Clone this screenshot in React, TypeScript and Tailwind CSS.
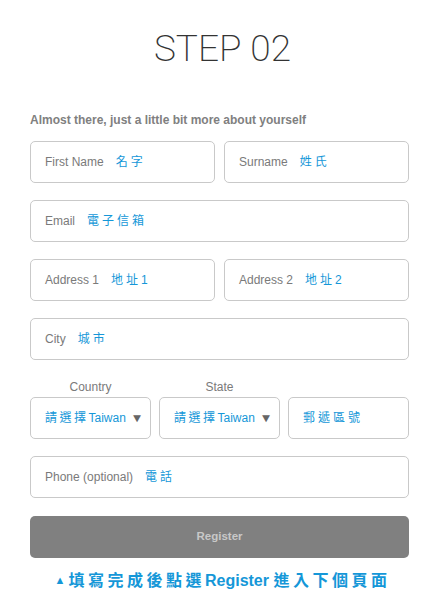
import React from "react";

const sans = { fontFamily: '"Liberation Sans", Arial, "Noto Sans CJK TC", sans-serif' };

function Field({ label, zh, className = "" }: { label: string; zh: string; className?: string }) {
  return (
    <div
      className={`h-[42px] rounded-[5px] border border-[#c9c9c9] bg-white flex items-center pl-[14px] ${className}`}
    >
      <span className="text-[12px] text-[#7a7a7a]">{label}</span>
      <span className="ml-[12px] text-[12px] text-[#1597d8] tracking-[3px]">{zh}</span>
    </div>
  );
}

function SelectBox({ text }: { text: string }) {
  return (
    <div className="h-[42px] rounded-[5px] border border-[#c9c9c9] bg-white flex items-center pl-[14px] pr-[7px]">
      <span className="text-[12px] text-[#1597d8] tracking-[2.5px]">請選擇</span>
      <span className="text-[12px] text-[#1597d8]">{text}</span>
      <span className="ml-auto text-[12px] text-[#666] scale-x-110">▼</span>
    </div>
  );
}

export default function App() {
  return (
    <div className="w-[445px] h-[611px] bg-white" style={sans}>
      <div className="pt-[28px] flex justify-center">
        <h1
          className="text-[37px] leading-[42px] text-[#333]"
          style={{ fontFamily: 'Roboto, "Liberation Sans", sans-serif', fontWeight: 200 }}
        >
          STEP 02
        </h1>
      </div>
      <div className="ml-[30px] w-[379px]">
        <p className="mt-[43px] text-[12px] leading-[14px] font-bold text-[#808080]">
          Almost there, just a little bit more about yourself
        </p>
        <div className="mt-[14px] flex flex-col gap-[17px]">
          <div className="grid grid-cols-2 gap-[9px]">
            <Field label="First Name" zh="名字" />
            <Field label="Surname" zh="姓氏" />
          </div>
          <Field label="Email" zh="電子信箱" />
          <div className="grid grid-cols-2 gap-[9px]">
            <Field label="Address 1" zh="地址1" />
            <Field label="Address 2" zh="地址2" />
          </div>
          <Field label="City" zh="城市" />
          <div>
            <div className="grid grid-cols-3 gap-[8px] mt-[3px] mb-[3px]">
              <div className="text-center text-[12px] leading-[14px] text-[#7a7a7a]">Country</div>
              <div className="text-center text-[12px] leading-[14px] text-[#7a7a7a]">State</div>
              <div />
            </div>
            <div className="grid grid-cols-3 gap-[8px]">
              <SelectBox text="Taiwan" />
              <SelectBox text="Taiwan" />
              <div className="h-[42px] rounded-[5px] border border-[#c9c9c9] bg-white flex items-center pl-[14px]">
                <span className="text-[12px] text-[#1597d8] tracking-[3px]">郵遞區號</span>
              </div>
            </div>
          </div>
          <Field label="Phone (optional)" zh="電話" />
        </div>
        <button className="mt-[18px] w-full h-[42px] rounded-[5px] bg-[#808080] text-[11.5px] font-bold text-[#c8c8c8]">
          Register
        </button>
        <p className="mt-[11px] pl-[6px] text-center text-[16px] leading-[22px] font-bold text-[#1597d8] tracking-[3.5px]">
          <span className="text-[11px] tracking-[3px] align-[2px]">▲</span>
          填寫完成後點選<span className="tracking-[0px]">Register </span>進入下個頁面
        </p>
      </div>
    </div>
  );
}
